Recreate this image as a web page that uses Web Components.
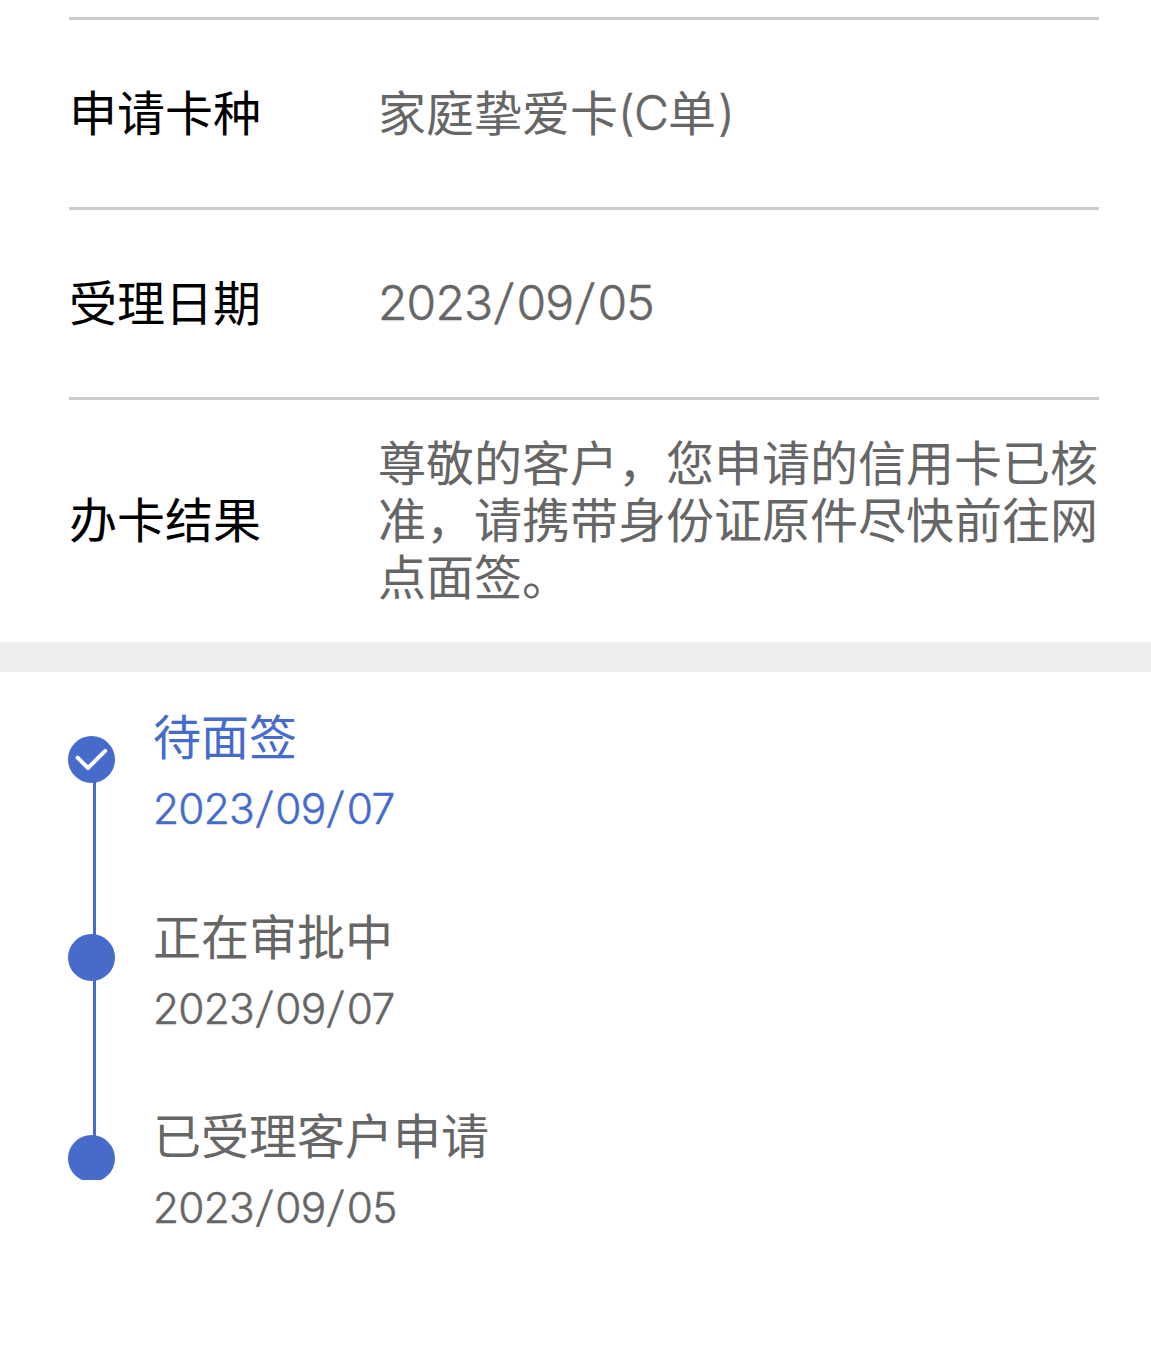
<!DOCTYPE html>
<html lang="zh-CN">
<head>
<meta charset="UTF-8">
<title>办卡进度</title>
<style>
    body {
        margin: 0;
        background: #fff;
        font-family: Inter, "Noto Sans CJK SC", sans-serif;
        font-size: 48px;
        line-height: 57px;
        color: #666;
    }
</style>
</head>
<body>
<info-list>
    <info-row label="申请卡种">家庭挚爱卡<latin-text gap="-0.8">(C</latin-text>单<latin-text class="close">)</latin-text></info-row>
    <info-row label="受理日期"><date-text value="2023/09/05"></date-text></info-row>
    <info-row label="办卡结果" class="result">尊敬的客户，您申请的信用卡已核准，请携带身份证原件尽快前往网点面签。</info-row>
</info-list>
<section-gap></section-gap>
<progress-timeline>
    <progress-step active date="2023/09/07">待面签</progress-step>
    <progress-step date="2023/09/07">正在审批中</progress-step>
    <progress-step date="2023/09/05">已受理客户申请</progress-step>
</progress-timeline>

<script>
class LatinText extends HTMLElement {
    constructor() {
        super();
        this.attachShadow({ mode: 'open' });
        // no whitespace around the slot, it would show up as a space in the line
        this.shadowRoot.innerHTML = `<style>
                :host {
                    display: inline-block;
                    font-weight: 300;
                    letter-spacing: ${this.getAttribute('gap') || 0}px;
                    transform: translateY(-1px);
                    -webkit-text-stroke: 0.5px currentColor;
                }
                :host(.close) { margin-left: 2px; }
            </style><slot></slot>`;
    }
}

class DateText extends HTMLElement {
    constructor() {
        super();
        this.attachShadow({ mode: 'open' });
    }

    connectedCallback() {
        const value = this.getAttribute('value').replace(/\//g, '<i>/</i>');
        this.shadowRoot.innerHTML = `
            <style>
                :host {
                    display: block;
                    margin: -1px 0 1px;
                    font-weight: 300;
                    letter-spacing: -0.018em;
                    white-space: nowrap;
                    -webkit-text-stroke: 0.5px currentColor;
                }
                i {
                    display: inline-block;
                    width: 0.505em;
                    font-style: normal;
                    letter-spacing: 0;
                    text-align: center;
                    transform: translateY(-0.02em) skewX(-6.4deg);
                }
            </style>
            <span>${value}</span>
        `;
    }
}

class InfoList extends HTMLElement {
    constructor() {
        super();
        this.attachShadow({ mode: 'open' });
        this.shadowRoot.innerHTML = `
            <style>
                :host { display: block; padding: 17px 52px 0 69px; }
            </style>
            <slot></slot>
        `;
    }
}

class InfoRow extends HTMLElement {
    constructor() {
        super();
        this.attachShadow({ mode: 'open' });
        this.shadowRoot.innerHTML = `
            <style>
                :host {
                    display: grid;
                    grid-template-columns: 309px 1fr;
                    align-items: center;
                    box-sizing: border-box;
                    height: 190px;
                    border-top: 3px solid #ccc;
                }
                :host(.result) { height: 245px; padding-bottom: 2px; }
                .label { color: #000; }
                .value { margin-right: -4px; }
            </style>
            <div class="label">${this.getAttribute('label')}</div>
            <div class="value"><slot></slot></div>
        `;
    }
}

class SectionGap extends HTMLElement {
    constructor() {
        super();
        this.attachShadow({ mode: 'open' });
        this.shadowRoot.innerHTML = `
            <style>
                :host { display: block; height: 30px; background: #ededed; }
            </style>
        `;
    }
}

class ProgressTimeline extends HTMLElement {
    constructor() {
        super();
        this.attachShadow({ mode: 'open' });
        this.shadowRoot.innerHTML = `
            <style>
                :host { display: flex; gap: 38px; padding: 37px 68px 0; }
                .rail { display: flex; flex-direction: column; width: 47px; padding-top: 27px; }
                .dot { height: 47px; border-radius: 50%; background: #466bcb; }
                .line { width: 3px; height: 153px; margin: -1px 0 -1px 25px; background: #466bcb; }
                .line.long { height: 156px; }
                .clip { height: 45px; overflow: hidden; }
                svg { display: block; }
            </style>
            <div class="rail">
                <div class="dot">
                    <svg width="47" height="47" viewBox="0 0 47 47" fill="none" stroke="#fff" stroke-width="4" stroke-linecap="round" stroke-linejoin="round">
                        <path d="M9.6 21.6 L20 32 L37.2 14.8"/>
                    </svg>
                </div>
                <div class="line"></div>
                <div class="dot"></div>
                <div class="line long"></div>
                <div class="clip"><div class="dot"></div></div>
            </div>
            <div class="steps"><slot></slot></div>
        `;
    }
}

class ProgressStep extends HTMLElement {
    constructor() {
        super();
        this.attachShadow({ mode: 'open' });
        this.shadowRoot.innerHTML = `
            <style>
                :host { display: block; height: 199.5px; }
                :host([active]) { color: #466bcb; }
                .date { padding-top: 15px; font-size: 42.4px; }
            </style>
            <div><slot></slot></div>
            <div class="date"><date-text value="${this.getAttribute('date')}"></date-text></div>
        `;
    }
}

customElements.define('latin-text', LatinText);
customElements.define('date-text', DateText);
customElements.define('info-list', InfoList);
customElements.define('info-row', InfoRow);
customElements.define('section-gap', SectionGap);
customElements.define('progress-timeline', ProgressTimeline);
customElements.define('progress-step', ProgressStep);
</script>
</body>
</html>
